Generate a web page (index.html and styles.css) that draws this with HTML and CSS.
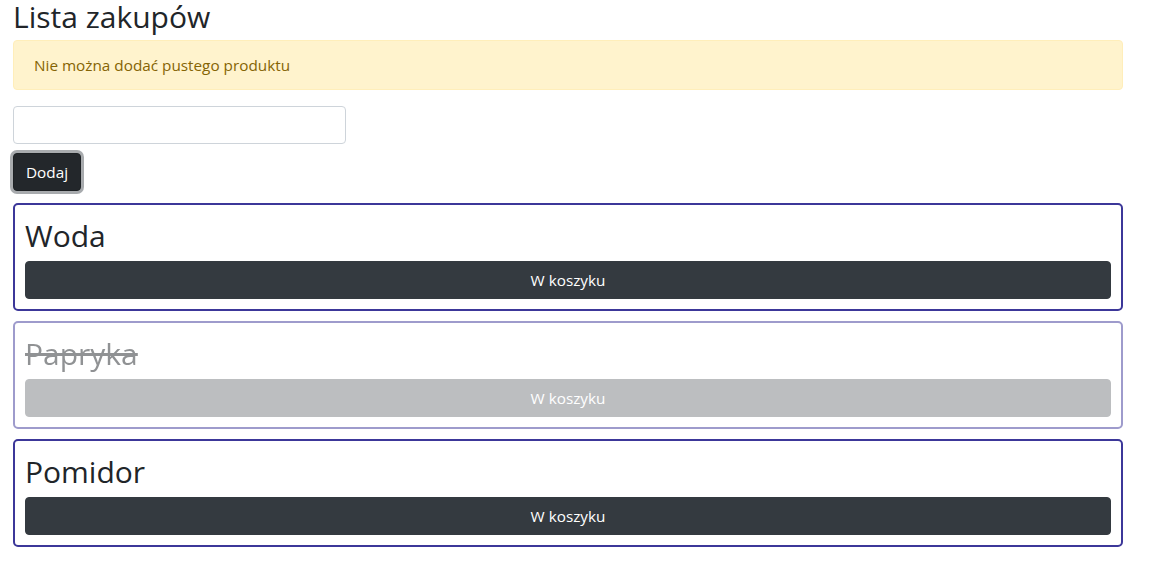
FILE: index.html
```html
<!DOCTYPE html>
<html lang="pl">
<head>
<meta charset="utf-8">
<title>Lista zakupów</title>
<link rel="stylesheet" href="styles.css">
</head>
<body>
<div class="container">
  <h1 class="page-title">Lista zakupów</h1>
  <div class="alert">Nie można dodać pustego produktu</div>
  <input class="field" type="text">
  <div class="actions"><button class="btn-add" type="button">Dodaj</button></div>
  <div class="list">
    <div class="item">
      <h2 class="item-name">Woda</h2>
      <button class="btn-cart" type="button">W koszyku</button>
    </div>
    <div class="item item-done">
      <h2 class="item-name">Papryka</h2>
      <button class="btn-cart" type="button" disabled>W koszyku</button>
    </div>
    <div class="item">
      <h2 class="item-name">Pomidor</h2>
      <button class="btn-cart" type="button">W koszyku</button>
    </div>
  </div>
</div>
</body>
</html>
```
FILE: styles.css
```css
* { box-sizing: border-box; }
html, body { margin: 0; padding: 0; background: #fff; }
body {
  font-family: "Open Sans", "Noto Sans", sans-serif;
  font-size: 16px;
  line-height: 24px;
  color: #212529;
}
.container {
  width: 1123px;
  padding-left: 13px;
}
.page-title {
  margin: 0 0 8px;
  padding-top: 1px;
  font-size: 30px;
  font-weight: 400;
  line-height: 31px;
}
.alert {
  height: 50px;
  padding: 12px 20px;
  background: #fff3cd;
  border: 1px solid #ffeeba;
  border-radius: 4px;
  color: #856404;
  margin-bottom: 16px;
  font-size: 15.3px;
}
.field {
  display: block;
  width: 333px;
  height: 38px;
  border: 1px solid #ced4da;
  border-radius: 4px;
  background: #fff;
  font: inherit;
  padding: 6px 12px;
}
.actions {
  margin-top: 9px;
  margin-bottom: 12px;
}
.btn-add {
  display: block;
  height: 38px;
  padding: 0 12px;
  background: #23272b;
  border: 1px solid #1d2124;
  border-radius: 4px;
  color: #fff;
  font: inherit;
  font-size: 15.3px;
  box-shadow: 0 0 0 3px rgba(82, 88, 93, 0.5);
}
.list {
  display: flex;
  flex-direction: column;
  gap: 10px;
}
.item {
  border: 2px solid #3c3799;
  border-radius: 5px;
  padding: 10px;
}
.item-name {
  margin: 0 0 6px;
  padding-top: 2px;
  font-size: 30px;
  font-weight: 400;
  line-height: 38px;
  color: #212529;
}
.btn-cart {
  display: block;
  width: 100%;
  height: 38px;
  background: #343a40;
  border: 1px solid #343a40;
  border-radius: 4px;
  color: #fff;
  font: inherit;
  font-size: 15.3px;
  padding: 0;
}
.item-done { opacity: 0.5; }
.item-done .item-name { text-decoration: line-through; }
.item-done .btn-cart { opacity: 0.65; }
```
